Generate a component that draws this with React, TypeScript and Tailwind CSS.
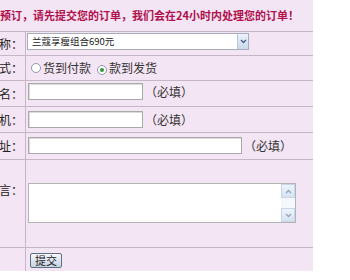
import React from "react";

const LINE = "border-[#c6b7c6]";

function Label({ text, pt }: { text: string; pt?: string }) {
  return (
    <div
      className={`w-[26px] shrink-0 border-r ${LINE} flex justify-end overflow-hidden pr-[2px] ${
        pt ? `items-start ${pt}` : "items-center"
      }`}
    >
      <span className="shrink-0 whitespace-nowrap text-[12px] leading-[16px] text-[#222]">{text}</span>
    </div>
  );
}

function TextInput({ w }: { w: string }) {
  return (
    <div
      className={`${w} h-[17px] shrink-0 bg-white border border-[#a9a9a9] shadow-[inset_1px_1px_0_#dcdcdc]`}
    />
  );
}

function Radio({ checked }: { checked?: boolean }) {
  return (
    <span className="inline-flex w-[10px] h-[10px] rounded-full border border-[#8e99a8] bg-white items-center justify-center shrink-0">
      {checked ? <span className="w-[4px] h-[4px] rounded-full bg-[#2f9a3a]" /> : null}
    </span>
  );
}

function Required() {
  return <span className="ml-[2px] text-[12px] leading-[17px] text-[#333] whitespace-nowrap">（必填）</span>;
}

export default function App() {
  return (
    <div className="w-[350px] h-[280px] bg-white overflow-hidden font-['Noto_Sans_CJK_SC','Noto_Sans',sans-serif]">
      <div className="w-[313px] bg-[#f4e5f4]">
        {/* header */}
        <div className={`h-[32px] border-b ${LINE} flex items-center overflow-hidden`}>
          <span className="whitespace-nowrap text-[11px] leading-none font-bold text-[#b0104c]">
            预订，请先提交您的订单，我们会在24小时内处理您的订单！
          </span>
        </div>

        {/* product */}
        <div className={`h-[24px] border-b ${LINE} flex`}>
          <Label text="称：" />
          <div className="flex-1 pt-[1px] pl-[1px]">
            <div className="w-[222px] h-[17px] bg-white border border-[#a5adb8] flex items-center">
              <span className="flex-1 pl-[4px] text-[9.5px] leading-none text-[#222] whitespace-nowrap">
                兰蔻享瘦组合690元
              </span>
              <span className="w-[11px] h-[15px] border-l border-[#b9c7da] bg-gradient-to-b from-[#eef3fb] to-[#c9d7ec] flex items-center justify-center">
                <svg width="7" height="5" viewBox="0 0 7 5">
                  <path d="M1 1 L3.5 3.5 L6 1" stroke="#4a5f86" strokeWidth="1.4" fill="none" />
                </svg>
              </span>
            </div>
          </div>
        </div>

        {/* payment */}
        <div className={`h-[25px] border-b ${LINE} flex`}>
          <Label text="式：" />
          <div className="flex-1 flex items-center pl-[5px] text-[12px] leading-none text-[#333]">
            <Radio />
            <span className="ml-[2px] whitespace-nowrap">货到付款</span>
            <span className="ml-[6px]">
              <Radio checked />
            </span>
            <span className="ml-[2px] whitespace-nowrap">款到发货</span>
          </div>
        </div>

        {/* name */}
        <div className={`h-[26px] border-b ${LINE} flex`}>
          <Label text="名：" />
          <div className="flex-1 flex items-start pt-[2px] pl-[2px]">
            <TextInput w="w-[115px]" />
            <Required />
          </div>
        </div>

        {/* phone */}
        <div className={`h-[26px] border-b ${LINE} flex`}>
          <Label text="机：" />
          <div className="flex-1 flex items-start pt-[4px] pl-[2px]">
            <TextInput w="w-[115px]" />
            <Required />
          </div>
        </div>

        {/* address */}
        <div className={`h-[27px] border-b ${LINE} flex`}>
          <Label text="址：" />
          <div className="flex-1 flex items-start pt-[4px] pl-[2px]">
            <TextInput w="w-[214px]" />
            <Required />
          </div>
        </div>

        {/* message */}
        <div className={`h-[88px] border-b ${LINE} flex`}>
          <Label text="言：" pt="pt-[22px]" />
          <div className="flex-1 pt-[23px] pl-[2px]">
            <div className="w-[268px] h-[40px] bg-white border border-[#b4b4b4] flex justify-end">
              <div className="w-[14px] h-full bg-[#f4f7fb] flex flex-col justify-between">
                <div className="h-[14px] bg-gradient-to-b from-[#eef3fb] to-[#d6e2f2] border border-[#c9d6e8] flex items-center justify-center">
                  <svg width="7" height="5" viewBox="0 0 7 5">
                    <path d="M1 4 L3.5 1.5 L6 4" stroke="#8ea3c2" strokeWidth="1.3" fill="none" />
                  </svg>
                </div>
                <div className="h-[14px] bg-gradient-to-b from-[#eef3fb] to-[#d6e2f2] border border-[#c9d6e8] flex items-center justify-center">
                  <svg width="7" height="5" viewBox="0 0 7 5">
                    <path d="M1 1 L3.5 3.5 L6 1" stroke="#8ea3c2" strokeWidth="1.3" fill="none" />
                  </svg>
                </div>
              </div>
            </div>
          </div>
        </div>

        {/* submit */}
        <div className="h-[23px] flex">
          <Label text="" />
          <div className="flex-1 pt-[5px] pl-[4px]">
            <button className="w-[32px] h-[15px] border border-[#5f6f82] rounded-[2px] bg-gradient-to-b from-[#f6f8fb] to-[#c6d2e3] text-[11px] leading-none text-[#222] flex items-center justify-center">
              提交
            </button>
          </div>
        </div>
      </div>
    </div>
  );
}
